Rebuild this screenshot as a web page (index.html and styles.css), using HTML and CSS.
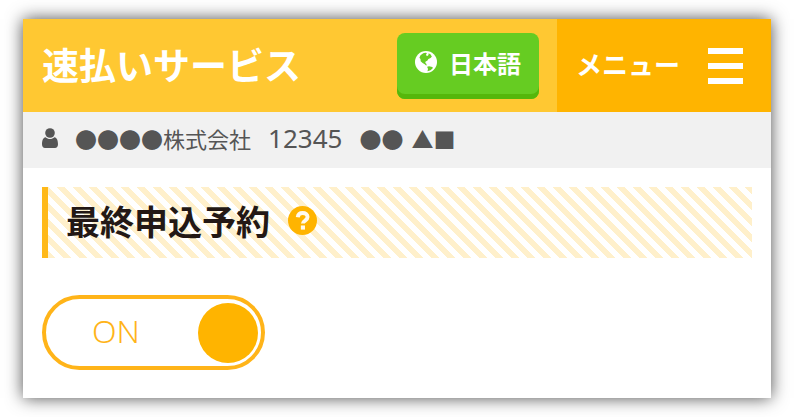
FILE: index.html
```html
<!DOCTYPE html>
<html lang="ja">
<head>
  <meta charset="UTF-8" />
  <meta name="viewport" content="width=device-width, initial-scale=1" />
  <title>速払いサービス</title>
  <link rel="stylesheet" href="styles.css">
</head>
<body>
  <div class="page">
    <header class="header">
      <h1 class="title">速払いサービス</h1>
      <button type="button" class="lang-btn">
        <svg class="globe" viewBox="0 0 24 24" aria-hidden="true">
          <circle cx="12" cy="12" r="12" fill="#fff" />
          <path fill="#66cc22" d="M9 2.5 6 4.500 4.800 7.300 6 8.600 6.200 11.200 8.300 13.200 10.600 14.400 12.400 16 12.600 14.200 11.200 13 11.600 11.400 13.400 10.600 14.600 8.800 17 7.600 18.400 6 16.600 3.400 14.600 2.600 14.800 4.400 13 5.600 12 4 13 2.200 11.200 1.800z" />
          <path fill="#66cc22" d="M13.200 17.200 15.400 16.600 18.800 17.400 19.600 18.600 17 21 13.600 22.200 14.200 19.600z" />
        </svg>
        日本語
      </button>
      <button type="button" class="menu-btn">
        <span class="menu-label">メニュー</span>
        <span class="bars"><i></i><i></i><i></i></span>
      </button>
    </header>

    <!-- Logged in user -->
    <div class="user-bar">
      <svg class="user-icon" viewBox="0 0 16 20" aria-hidden="true">
        <circle cx="8" cy="5" r="4.800" />
        <path d="M3.600 9.200C1 9.700 0 12.600 0 16.200 0 18.600 1.200 20 3 20h10c1.800 0 3-1.400 3-3.800 0-3.600-1-6.500-3.600-7C11.200 10.400 9.700 11 8 11s-3.200-.6-4.400-1.800z" />
      </svg>
      <span>●●●●株式会社</span>
      <span class="number">12345</span>
      <span class="name"><span>●●</span><span>▲■</span></span>
    </div>

    <main class="content">
      <div class="heading">
        <h2>最終申込予約</h2>
        <button type="button" class="help-btn" aria-label="ヘルプ">
          <svg viewBox="0 0 28 28" aria-hidden="true">
            <circle cx="14" cy="14" r="14" fill="#ffb400" />
            <path d="M9.400 10.800C9.800 8 11.600 6.800 14.100 6.800c2.700 0 4.800 1.400 4.800 3.900 0 3.400-4.500 3.200-4.500 6.300" fill="none" stroke="#fffaf0" stroke-width="3.800" />
            <rect x="12.400" y="18.800" width="4" height="4" fill="#fffaf0" />
          </svg>
        </button>
      </div>

      <label class="toggle">
        <span>ON</span>
        <input type="checkbox" checked />
      </label>
    </main>
  </div>
</body>
</html>
```

FILE: styles.css
```css
* {
  box-sizing: border-box;
}
body {
  margin: 0;
  padding: 19px 23px;
  background: #fff;
  color: #231815;
  font-family: "Noto Sans CJK JP", sans-serif;
}
button {
  border: none;
  padding: 0;
  color: #fff;
  font-family: inherit;
  font-weight: bold;
  cursor: pointer;
}
.page {
  background: #fff;
  box-shadow: 0 0 16px rgba(0, 0, 0, 0.7);
}

/* Header */
.header {
  display: flex;
  align-items: center;
  height: 93px;
  background: #ffc832;
}
.title {
  flex: 1;
  margin: 0;
  padding: 0 0 4px 19px;
  color: #fff;
  font-size: 37px;
  line-height: 48px;
}
.lang-btn {
  display: flex;
  align-items: center;
  gap: 12px;
  height: 66px;
  padding: 0 18px 7px;
  margin-right: 18px;
  border-radius: 8px;
  background: #66cc22;
  box-shadow: inset 0 -5px 0 #55b70b;
  font-size: 24px;
}
.globe {
  width: 22px;
  height: 22px;
}
.menu-btn {
  display: flex;
  align-items: center;
  align-self: stretch;
  gap: 28px;
  padding: 0 28px 0 19px;
  background: #ffb400;
  font-size: 26px;
}
.menu-label {
  padding-bottom: 4px;
}
.bars {
  display: grid;
  gap: 9px;
  width: 35px;
}
.bars i {
  height: 6px;
  background: #fff;
}

/* User info */
.user-bar {
  display: flex;
  align-items: center;
  gap: 17px;
  height: 56px;
  padding: 0 19px 4px;
  background: #f1f1f1;
  color: #555;
  font-size: 22px;
  line-height: 32px;
}
.user-icon {
  width: 16px;
  height: 20px;
  fill: #555;
}
.number {
  font-family: "Noto Sans", sans-serif;
  font-size: 26px;
}
.name {
  display: flex;
  gap: 8px;
}

/* Content */
.content {
  padding: 19px 19px 28px;
}
.heading {
  display: flex;
  align-items: center;
  gap: 18px;
  height: 71px;
  margin-bottom: 37px;
  padding: 0 0 4px 18px;
  border-left: 6px solid #ffb919;
  background: linear-gradient(45deg, #fff 25%, #fff0cb 25%, #fff0cb 50%, #fff 50%, #fff 75%, #fff0cb 75%) right top / 16px 16px;
}
.heading h2 {
  margin: 0;
  font-size: 34px;
  line-height: 48px;
}
.help-btn {
  width: 29px;
  height: 29px;
  border-radius: 50%;
  background: none;
}
.help-btn svg {
  display: block;
}
.toggle {
  display: flex;
  align-items: center;
  justify-content: space-between;
  width: 223px;
  height: 75px;
  padding: 0 3px 0 46px;
  border: 4px solid #ffb419;
  border-radius: 38px;
  color: #ffb419;
  font-family: "Noto Sans", sans-serif;
  font-size: 32px;
  font-weight: 300;
  line-height: 40px;
  cursor: pointer;
}
.toggle span {
  padding-bottom: 4px;
}
.toggle input {
  appearance: none;
  width: 60px;
  height: 60px;
  margin: 0;
  border-radius: 50%;
  background: #ffb400;
}
.toggle input:not(:checked) {
  background: #ccc;
}
```
